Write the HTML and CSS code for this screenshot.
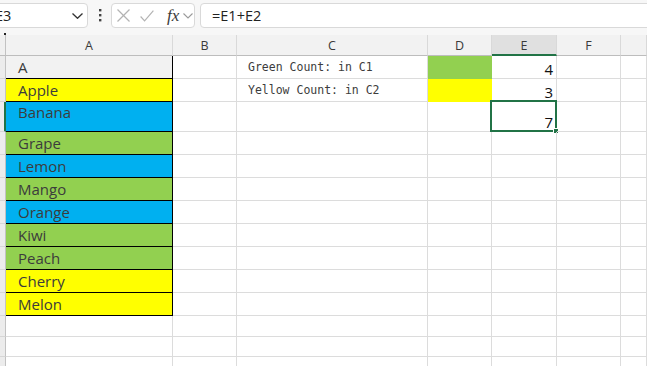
FILE: index.html
```html
<!DOCTYPE html>
<html>
<head>
<meta charset="utf-8">
<link rel="stylesheet" href="styles.css">
</head>
<body>
<div class="app">
  <div class="toolbar">
    <div class="namebox">
      <span>E3</span>
      <svg class="chev" width="11" height="6" viewBox="0 0 11 6"><polyline points="0.5,0.5 5.5,5.3 10.5,0.5" fill="none" stroke="#333" stroke-width="1.3"/></svg>
    </div>
    <div class="vdots">
      <svg width="3" height="13" viewBox="0 0 3 13"><rect x="0" y="0" width="2.4" height="2.4" fill="#444"/><rect x="0" y="5" width="2.4" height="2.4" fill="#444"/><rect x="0" y="10" width="2.4" height="2.4" fill="#444"/></svg>
    </div>
    <div class="fxbox">
      <svg class="xicon" width="13" height="13" viewBox="0 0 13 13"><line x1="0.5" y1="0.5" x2="12.5" y2="12.5" stroke="#b3b3b3" stroke-width="1.2"/><line x1="12.5" y1="0.5" x2="0.5" y2="12.5" stroke="#b3b3b3" stroke-width="1.2"/></svg>
      <svg class="check" width="14" height="12" viewBox="0 0 14 12"><polyline points="0.6,6.5 4.6,10.8 13.4,0.6" fill="none" stroke="#b3b3b3" stroke-width="1.2"/></svg>
      <span class="fx">fx</span>
      <svg class="chev2" width="10" height="6" viewBox="0 0 10 6"><polyline points="0.5,0.5 5,5 9.5,0.5" fill="none" stroke="#9a9a9a" stroke-width="1.1"/></svg>
    </div>
    <div class="formula">=E1+E2</div>
  </div>

  <div class="sheet">
    <div class="row head">
      <div class="c rh corner"><span class="dot"></span></div>
      <div class="c ch">A</div>
      <div class="c ch">B</div>
      <div class="c ch">C</div>
      <div class="c ch">D</div>
      <div class="c ch chsel">E</div>
      <div class="c ch">F</div>
      <div class="c ch"></div>
    </div>

    <div class="row">
      <div class="c rh"></div>
      <div class="c fruit gray">A</div>
      <div class="c"></div>
      <div class="c mono">Green Count: in C1</div>
      <div class="c fill-green"></div>
      <div class="c num">4</div>
      <div class="c"></div>
      <div class="c"></div>
    </div>

    <div class="row">
      <div class="c rh"></div>
      <div class="c fruit yellow">Apple</div>
      <div class="c"></div>
      <div class="c mono">Yellow Count: in C2</div>
      <div class="c fill-yellow"></div>
      <div class="c num">3</div>
      <div class="c"></div>
      <div class="c"></div>
    </div>

    <div class="row tall">
      <div class="c rh rhsel"></div>
      <div class="c fruit blue">Banana</div>
      <div class="c"></div>
      <div class="c"></div>
      <div class="c"></div>
      <div class="c num active">7<span class="sel"><span class="handle"></span></span></div>
      <div class="c"></div>
      <div class="c"></div>
    </div>

    <div class="row">
      <div class="c rh"></div>
      <div class="c fruit green">Grape</div>
      <div class="c"></div><div class="c"></div><div class="c"></div><div class="c"></div><div class="c"></div><div class="c"></div>
    </div>
    <div class="row">
      <div class="c rh"></div>
      <div class="c fruit blue">Lemon</div>
      <div class="c"></div><div class="c"></div><div class="c"></div><div class="c"></div><div class="c"></div><div class="c"></div>
    </div>
    <div class="row">
      <div class="c rh"></div>
      <div class="c fruit green">Mango</div>
      <div class="c"></div><div class="c"></div><div class="c"></div><div class="c"></div><div class="c"></div><div class="c"></div>
    </div>
    <div class="row">
      <div class="c rh"></div>
      <div class="c fruit blue">Orange</div>
      <div class="c"></div><div class="c"></div><div class="c"></div><div class="c"></div><div class="c"></div><div class="c"></div>
    </div>
    <div class="row">
      <div class="c rh"></div>
      <div class="c fruit green">Kiwi</div>
      <div class="c"></div><div class="c"></div><div class="c"></div><div class="c"></div><div class="c"></div><div class="c"></div>
    </div>
    <div class="row">
      <div class="c rh"></div>
      <div class="c fruit green">Peach</div>
      <div class="c"></div><div class="c"></div><div class="c"></div><div class="c"></div><div class="c"></div><div class="c"></div>
    </div>
    <div class="row">
      <div class="c rh"></div>
      <div class="c fruit yellow">Cherry</div>
      <div class="c"></div><div class="c"></div><div class="c"></div><div class="c"></div><div class="c"></div><div class="c"></div>
    </div>
    <div class="row">
      <div class="c rh"></div>
      <div class="c fruit yellow">Melon</div>
      <div class="c"></div><div class="c"></div><div class="c"></div><div class="c"></div><div class="c"></div><div class="c"></div>
    </div>
    <div class="row r21">
      <div class="c rh"></div>
      <div class="c"></div><div class="c"></div><div class="c"></div><div class="c"></div><div class="c"></div><div class="c"></div><div class="c"></div>
    </div>
    <div class="row r20">
      <div class="c rh"></div>
      <div class="c"></div><div class="c"></div><div class="c"></div><div class="c"></div><div class="c"></div><div class="c"></div><div class="c"></div>
    </div>
    <div class="row r20">
      <div class="c rh"></div>
      <div class="c"></div><div class="c"></div><div class="c"></div><div class="c"></div><div class="c"></div><div class="c"></div><div class="c"></div>
    </div>
  </div>
</div>
</body>
</html>
```

FILE: styles.css
```css
* { box-sizing: border-box; }
html, body { margin: 0; padding: 0; }
body {
  width: 647px;
  height: 366px;
  overflow: hidden;
  background: #ffffff;
  font-family: "Open Sans", "Noto Sans", sans-serif;
  color: #333;
}
.app { width: 647px; height: 366px; overflow: hidden; }

/* ---------- toolbar ---------- */
.toolbar {
  height: 35px;
  padding-top: 3px;
  display: flex;
  align-items: flex-start;
  background: #f7f7f7;
}
.namebox {
  margin-left: -14px;
  width: 102px;
  height: 25px;
  flex: none;
  background: #fff;
  border: 1px solid #d9d9d9;
  border-radius: 4px;
  display: flex;
  align-items: center;
  justify-content: space-between;
  padding-left: 8px;
  padding-right: 4px;
  font-size: 14.5px;
  color: #222;
}
.namebox .chev { margin-top: 1px; }
.vdots {
  width: 23px;
  height: 25px;
  flex: none;
  display: flex;
  align-items: center;
  justify-content: center;
  padding-left: 1px;
}
.fxbox {
  width: 84px;
  height: 25px;
  flex: none;
  background: #fff;
  border: 1px solid #d9d9d9;
  border-radius: 4px;
  display: flex;
  align-items: center;
  padding-left: 5px;
}
.fxbox .xicon { margin-right: 10px; }
.fxbox .check { margin-right: 13px; }
.fx {
  font-family: "Liberation Serif", "DejaVu Serif", serif;
  font-style: italic;
  font-size: 17px;
  color: #3a3a3a;
  line-height: 1;
  margin-top: 0;
  margin-right: 4px;
}
.fxbox .chev2 { margin-top: 1px; }
.formula {
  flex: 1;
  margin-left: 5px;
  margin-right: -10px;
  height: 25px;
  background: #fff;
  border: 1px solid #d9d9d9;
  border-radius: 4px;
  padding-left: 11px;
  display: flex;
  align-items: center;
  font-size: 14.5px;
  color: #222;
}

/* ---------- sheet ---------- */
.sheet { display: flex; flex-direction: column; }
.row {
  display: grid;
  grid-template-columns: 6px 167px 64px 191px 64px 65px 64px 1fr;
  height: 23px;
  flex: none;
}
.row.head { height: 21px; }
.row.tall { height: 30px; }
.row.r21 { height: 21px; }
.row.r20 { height: 20px; }

.c {
  border-right: 1px solid #dcdcdc;
  border-bottom: 1px solid #dcdcdc;
  white-space: nowrap;
  overflow: visible;
  display: flex;
  position: relative;
}
.rh {
  background: #ececec;
  border-right: 1px solid #c2c2c2;
  border-bottom: 1px solid #d6d6d6;
}
.rhsel { border-right: 2px solid #217346; }
.corner { background: #f0f0f0; border-bottom: 1px solid #bdbdbd; }
.corner .dot {
  position: absolute;
  right: -1px;
  top: -2px;
  width: 2px;
  height: 2px;
  background: #222;
}

.ch {
  background: #f2f2f2;
  border-right: 1px solid #d9d9d9;
  border-bottom: 1px solid #bdbdbd;
  justify-content: center;
  align-items: center;
  font-size: 12.5px;
  color: #3a3a3a;
  padding-top: 1px;
}
.chsel {
  background: #e0e0e0;
  border-bottom: 2px solid #217346;
  padding-top: 2px;
}

.fruit {
  font-size: 15px;
  line-height: 18px;
  padding-left: 12px;
  padding-top: 2px;
  align-items: flex-start;
  color: #3c3c3c;
  border-right: 1px solid #000;
  border-bottom: 1px solid #000;
}
.gray { background: #f2f2f2; }
.yellow { background: #ffff00; }
.blue { background: #00b0f0; }
.green { background: #92d050; }
.tall .fruit { padding-top: 1px; }

.fill-green { background: #92d050; border-color: #92d050; }
.fill-yellow { background: #ffff00; border-color: #ffff00; }

.mono {
  font-family: "DejaVu Sans Mono", "Liberation Mono", monospace;
  font-size: 11.5px;
  color: #3c3c3c;
  align-items: center;
  padding-left: 11px;
  padding-bottom: 1px;
}

.num {
  justify-content: flex-end;
  align-items: flex-end;
  font-size: 15px;
  line-height: 18px;
  padding-right: 3px;
  padding-bottom: 0;
  color: #111;
}

.sel {
  position: absolute;
  left: -2px;
  top: -2px;
  right: -1px;
  bottom: -1px;
  border: 2px solid #217346;
}
.handle {
  position: absolute;
  right: -4px;
  bottom: -4px;
  width: 6px;
  height: 6px;
  background: #217346;
  border: 1px solid #fff;
}
```
